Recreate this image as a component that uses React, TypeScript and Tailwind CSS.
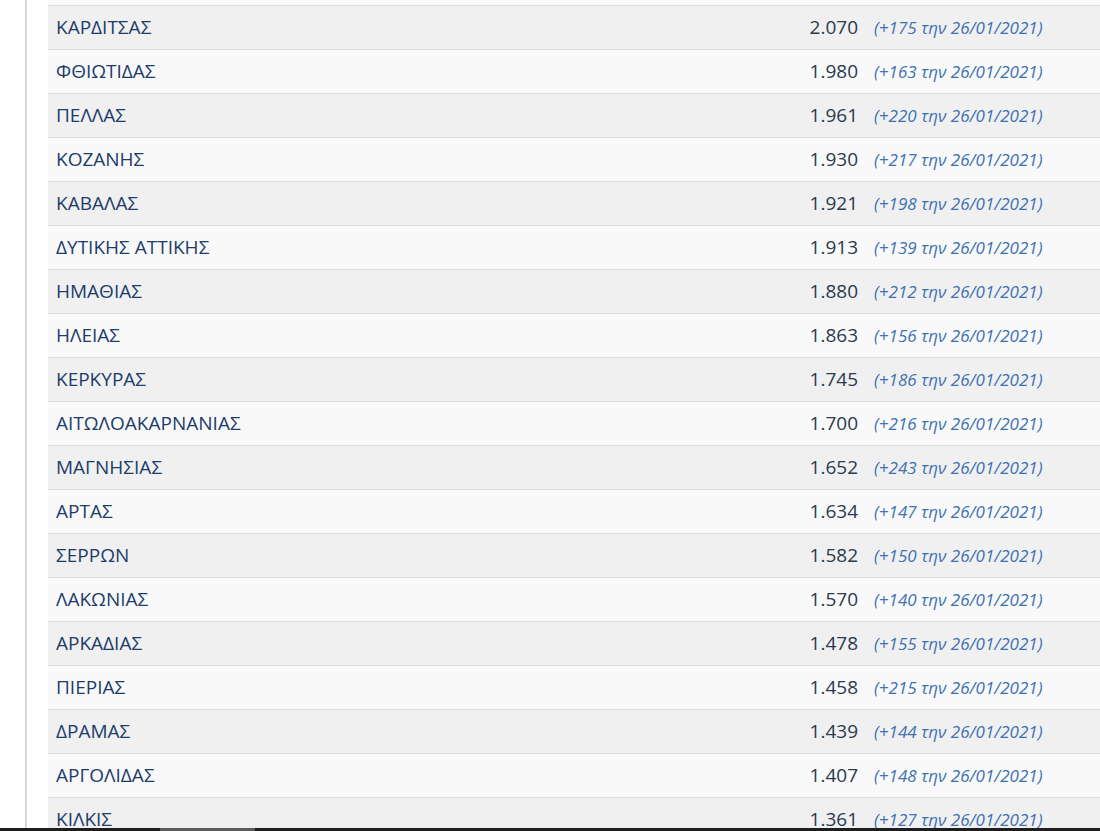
import React from "react";

const rows: [string, string, string][] = [
  ["ΚΑΡΔΙΤΣΑΣ", "2.070", "+175"],
  ["ΦΘΙΩΤΙΔΑΣ", "1.980", "+163"],
  ["ΠΕΛΛΑΣ", "1.961", "+220"],
  ["ΚΟΖΑΝΗΣ", "1.930", "+217"],
  ["ΚΑΒΑΛΑΣ", "1.921", "+198"],
  ["ΔΥΤΙΚΗΣ ΑΤΤΙΚΗΣ", "1.913", "+139"],
  ["ΗΜΑΘΙΑΣ", "1.880", "+212"],
  ["ΗΛΕΙΑΣ", "1.863", "+156"],
  ["ΚΕΡΚΥΡΑΣ", "1.745", "+186"],
  ["ΑΙΤΩΛΟΑΚΑΡΝΑΝΙΑΣ", "1.700", "+216"],
  ["ΜΑΓΝΗΣΙΑΣ", "1.652", "+243"],
  ["ΑΡΤΑΣ", "1.634", "+147"],
  ["ΣΕΡΡΩΝ", "1.582", "+150"],
  ["ΛΑΚΩΝΙΑΣ", "1.570", "+140"],
  ["ΑΡΚΑΔΙΑΣ", "1.478", "+155"],
  ["ΠΙΕΡΙΑΣ", "1.458", "+215"],
  ["ΔΡΑΜΑΣ", "1.439", "+144"],
  ["ΑΡΓΟΛΙΔΑΣ", "1.407", "+148"],
  ["ΚΙΛΚΙΣ", "1.361", "+127"],
];

export default function App() {
  return (
    <div
      className="h-[831px] w-[1100px] overflow-hidden flex flex-col bg-white"
      style={{ fontFamily: '"Open Sans", "Noto Sans", sans-serif' }}
    >
      <div className="flex-1 flex min-h-0">
        <div className="w-[25px] bg-white" />
        <div className="w-[2px] bg-gradient-to-r from-[#c8c8c8] to-[#e4e4e4]" />
        <div className="flex-1 pl-[21px] bg-white min-w-0 overflow-hidden">
          <div className="h-[5px] bg-[#f9f9f9]" />
          {rows.map(([name, num, inc], i) => (
            <div
              key={name}
              className={`flex items-center h-[44px] border-t border-[#dddddd] ${
                i % 2 === 0 ? "bg-[#f0f0f0]" : "bg-[#f9f9f9]"
              }`}
            >
              <div className="pl-[8px] w-[500px] text-[19px] text-[#1d3c6b] leading-none -mt-[1px]">
                {name}
              </div>
              <div className="w-[310px] text-right text-[19px] text-[#2b3a4f] leading-none -mt-[1px]">
                {num}
              </div>
              <div className="pl-[16px] text-[17px] italic text-[#3d72b4] leading-none whitespace-nowrap">
                ({inc} την 26/01/2021)
              </div>
            </div>
          ))}
        </div>
      </div>
      <div className="h-[3px] flex bg-[#1e1e1e] shrink-0">
        <div className="w-[160px]" />
        <div className="w-[95px] bg-[#5a5a5a]" />
      </div>
    </div>
  );
}
